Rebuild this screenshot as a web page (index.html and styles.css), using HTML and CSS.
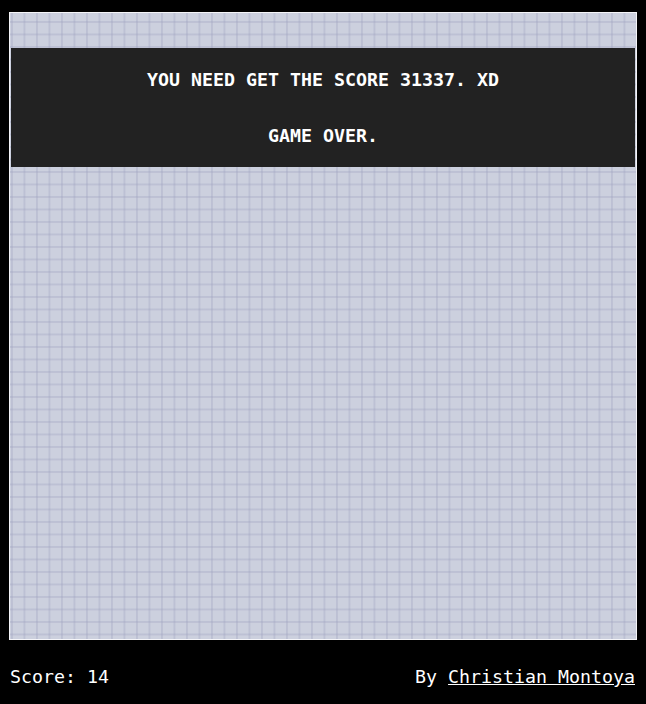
FILE: index.html
```html
<!DOCTYPE html>
<html>
<head>
<meta charset="utf-8">
<link rel="stylesheet" href="styles.css">
</head>
<body>
<div class="board">
  <div class="message">
    <p class="line">YOU NEED GET THE SCORE 31337. XD</p>
    <p class="line">GAME OVER.</p>
  </div>
</div>
<div class="footer">
  <span class="score">Score: 14</span>
  <span class="credit">By <a class="author" href="#">Christian Montoya</a></span>
</div>
</body>
</html>
```
FILE: styles.css
```css
html, body {
  margin: 0;
  padding: 0;
  background: #000;
}
body {
  font-family: "DejaVu Sans Mono", "Liberation Mono", monospace;
  font-size: 18.27px;
  color: #fff;
  width: 646px;
  height: 704px;
  overflow: hidden;
}
.board {
  position: relative;
  margin: 12px 0 0 9px;
  width: 626px;
  height: 626px;
  border: 1px solid #f4f4f8;
  background-color: #ccd0de;
  background-image:
    linear-gradient(to right, rgba(160,164,192,0.35) 2px, transparent 2px),
    linear-gradient(to bottom, rgba(160,164,192,0.35) 2px, transparent 2px);
  background-size: 12.5px 12.5px;
  background-position: 1px 8px;
}
.message {
  position: absolute;
  top: 35px;
  left: 1px;
  right: 1px;
  height: 119px;
  box-sizing: border-box;
  background: #222222;
  padding-top: 20px;
  text-align: center;
  font-weight: bold;
}
.line {
  margin: 0 0 32px 0;
  line-height: 24px;
}
.footer {
  display: flex;
  justify-content: space-between;
  padding: 0 11px 0 10px;
  margin-top: 26px;
  line-height: 22px;
}
.author {
  color: #fff;
  text-decoration: underline;
}
```
